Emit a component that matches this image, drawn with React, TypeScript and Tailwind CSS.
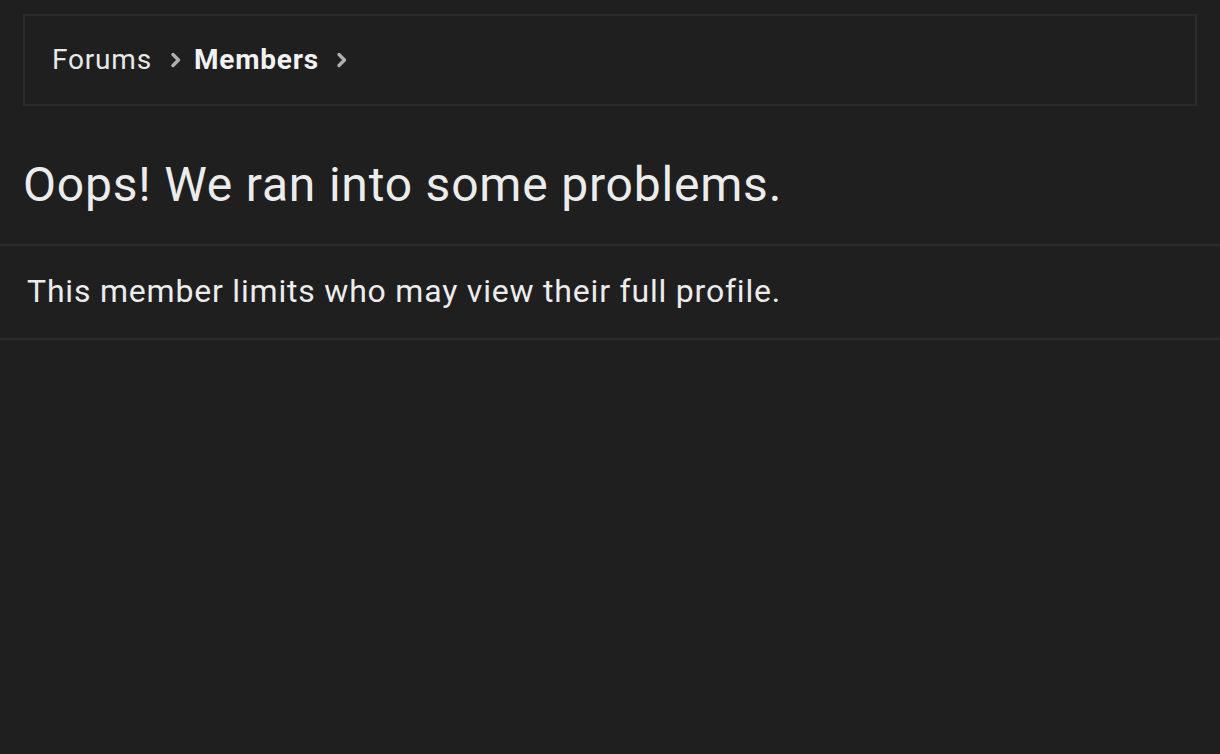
import React from 'react';

const Chevron: React.FC = () => (
  <svg width="12" height="16" viewBox="0 0 12 16" className="shrink-0">
    <path d="M3 2.5 L8.5 8 L3 13.5" fill="none" stroke="#b0b0b0" strokeWidth="3.4" strokeLinecap="round" strokeLinejoin="round" />
  </svg>
);

export default function App() {
  return (
    <div className="min-h-screen bg-[#1f1f1f] text-[#ededed] font-['Roboto',sans-serif] tracking-[0.8px]">
      {/* Breadcrumb */}
      <div className="pt-[14px] px-[23px]">
        <div className="h-[92px] border-2 border-[#2a2a2a] flex items-center pl-[27px] gap-[12px]">
          <div className="flex items-center gap-[18px]">
            <span className="text-[28px] text-[#e8e8e8]">Forums</span>
            <Chevron />
          </div>
          <div className="flex items-center gap-[17px]">
            <span className="text-[28px] font-bold text-[#f2f2f2]">Members</span>
            <Chevron />
          </div>
        </div>
      </div>

      {/* Title */}
      <h1 className="px-[23px] pt-[47px] pb-[27px] text-[48px] leading-[64px] font-normal text-[#ececec]">
        Oops! We ran into some problems.
      </h1>

      {/* Message */}
      <div className="border-t-2 border-b-2 border-[#292929] px-[27px] pt-[25px] pb-[27px]">
        <p className="text-[32px] leading-[40px] text-[#ececec]">This member limits who may view their full profile.</p>
      </div>
    </div>
  );
}
